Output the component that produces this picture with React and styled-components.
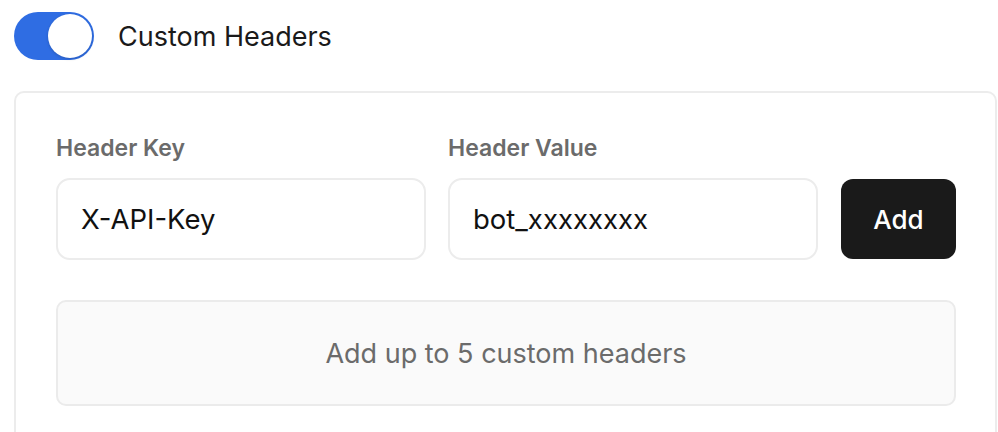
import React, { useState } from "react";
import styled, { createGlobalStyle } from "styled-components";

const Global = createGlobalStyle`
  html, body { margin: 0; padding: 0; background: #ffffff; }
  body { font-family: Inter, "Noto Sans", sans-serif; -webkit-font-smoothing: antialiased; }
  * { box-sizing: border-box; }
`;

const Page = styled.div`
  width: 998px;
  height: 432px;
  overflow: hidden;
  padding: 12px 0 0 14px;
`;

const ToggleRow = styled.div`
  display: flex;
  align-items: center;
  gap: 24px;
  height: 48px;
`;

const Switch = styled.button`
  position: relative;
  width: 80px;
  height: 48px;
  border: none;
  padding: 0;
  border-radius: 24px;
  background: ${(p) => (p.$on ? "#2f6de3" : "#d4d4d4")};
  cursor: pointer;
  flex: none;
`;

const Knob = styled.span`
  position: absolute;
  top: 2px;
  left: ${(p) => (p.$on ? "34px" : "2px")};
  width: 44px;
  height: 44px;
  border-radius: 50%;
  background: #ffffff;
  box-shadow: 0 1px 3px rgba(0, 0, 0, 0.18);
`;

const ToggleLabel = styled.span`
  font-size: 27px;
  color: #1a1a1a;
  font-weight: 400;
`;

const Card = styled.div`
  margin-top: 31px;
  width: 983px;
  height: 400px;
  border: 2px solid #ececec;
  border-radius: 10px;
  padding: 41px 39px 0 40px;
  display: flex;
  flex-direction: column;
  gap: 40px;
`;

const FieldsRow = styled.div`
  display: flex;
  align-items: flex-end;
  gap: 22px;
`;

const Field = styled.div`
  display: flex;
  flex-direction: column;
  gap: 16px;
  width: 370px;
`;

const Label = styled.label`
  font-size: 23px;
  font-weight: 600;
  color: #6b6b6b;
  line-height: 28px;
`;

const Input = styled.input`
  width: 370px;
  height: 82px;
  border: 2px solid #ececec;
  border-radius: 14px;
  padding: 0 23px;
  font-family: Inter, "Noto Sans", sans-serif;
  font-size: 27.5px;
  color: #111111;
  background: #ffffff;
  outline: none;
`;

const AddButton = styled.button`
  margin-left: 1px;
  margin-bottom: 1px;
  width: 117px;
  height: 80px;
  border: none;
  border-radius: 12px;
  background: #1a1a1a;
  color: #ffffff;
  font-family: Inter, "Noto Sans", sans-serif;
  font-size: 26px;
  font-weight: 500;
  cursor: pointer;
`;

const Hint = styled.div`
  width: 900px;
  height: 106px;
  border: 2px solid #ebebeb;
  border-radius: 10px;
  background: #fafafa;
  display: flex;
  align-items: center;
  justify-content: center;
  font-size: 27px;
  color: #6b6b6b;
`;

export default function App() {
  const [on, setOn] = useState(true);
  return (
    <>
      <Global />
      <Page>
        <ToggleRow>
          <Switch $on={on} onClick={() => setOn(!on)} aria-label="Custom Headers">
            <Knob $on={on} />
          </Switch>
          <ToggleLabel>Custom Headers</ToggleLabel>
        </ToggleRow>
        <Card>
          <FieldsRow>
            <Field>
              <Label>Header Key</Label>
              <Input defaultValue="X-API-Key" />
            </Field>
            <Field>
              <Label>Header Value</Label>
              <Input defaultValue="bot_xxxxxxxx" />
            </Field>
            <AddButton>Add</AddButton>
          </FieldsRow>
          <Hint>Add up to 5 custom headers</Hint>
        </Card>
      </Page>
    </>
  );
}
